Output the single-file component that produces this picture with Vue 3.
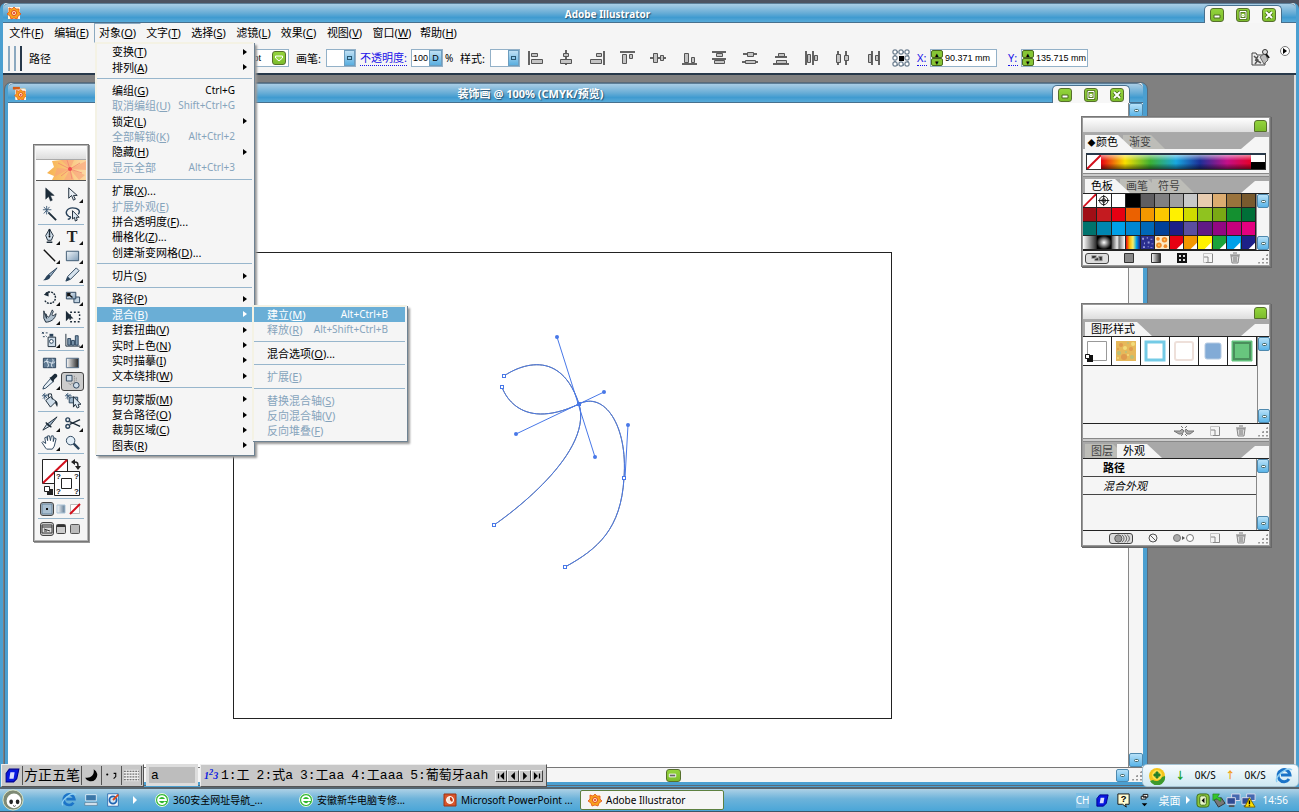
<!-- App.vue -->
<template>
    <div class="desktop">
        <svg class="defs" aria-hidden="true">
            <defs>
                <linearGradient id="mono"><stop offset="0" stop-color="#fff" /><stop offset="1" stop-color="#222" /></linearGradient>
                <linearGradient id="steel"><stop offset="0" stop-color="#fff" /><stop offset="1" stop-color="#5d7993" /></linearGradient>
                <linearGradient id="steel2" x2="1" y2="1"><stop offset="0" stop-color="#f2f7fb" /><stop offset="1" stop-color="#7f9db8" /></linearGradient>
            </defs>
        </svg>
        <main class="app-window">
            <header class="titlebar">
                <svg class="logo" viewBox="0 0 14 14" v-html="flower"></svg>
                <h1>Adobe Illustrator</h1>
                <div class="window-buttons">
                    <button v-for="b in windowButtons" :key="b.name" :aria-label="b.name" class="green">
                        <svg viewBox="0 0 12 12" v-html="b.icon"></svg>
                    </button>
                </div>
            </header>

            <nav class="menubar">
                <div v-for="m in menus" :key="m.key" class="menu-root" :class="{ open: m.key === openMenu }">
                    <button @click="openMenu = m.key">{{ m.label }}(<u>{{ m.key }}</u>)</button>
                    <ul v-if="m.key === 'O' && openMenu === 'O'" class="menu main-menu">
                        <li v-for="(item, i) in objectMenu" :key="i"
                            :class="{ separator: !item.label, selected: item.children }">
                            <button v-if="item.label" :disabled="item.disabled">
                                <span>{{ item.label }}<template v-if="item.key">(<u>{{ item.key }}</u>)</template>{{ item.dots }}</span>
                                <kbd v-if="item.shortcut">{{ item.shortcut }}</kbd>
                                <i v-if="item.arrow" class="arrow"></i>
                            </button>
                            <ul v-if="item.children" class="menu sub-menu">
                                <li v-for="(sub, j) in item.children" :key="j"
                                    :class="{ separator: !sub.label, selected: j === 0 }">
                                    <button v-if="sub.label" :disabled="sub.disabled">
                                        <span>{{ sub.label }}(<u>{{ sub.key }}</u>){{ sub.dots }}</span>
                                        <kbd v-if="sub.shortcut">{{ sub.shortcut }}</kbd>
                                    </button>
                                </li>
                            </ul>
                        </li>
                    </ul>
                </div>
            </nav>

            <section class="controlbar">
                <div class="grip"><i></i><i></i><i></i></div>
                <strong class="kind">路径</strong>
                <div class="field stroke-field">
                    <input aria-label="描边粗细" value="1 pt">
                    <button class="green" aria-label="描边选项"><svg viewBox="0 0 12 12"><path d="M2.500 4h7v2L6 9 2.500 6z" fill="#9bdc4a" stroke="#fff" /></svg></button>
                </div>
                <span class="label">画笔:</span>
                <div class="field picker"><span></span><button aria-label="画笔"><i></i></button></div>
                <a href="#" class="link">不透明度:</a>
                <div class="field opacity-field">
                    <input aria-label="不透明度" value="100">
                    <button aria-label="不透明度滑块">D</button>
                </div>
                <span class="percent">%</span>
                <span class="label">样式:</span>
                <div class="field picker"><span></span><button aria-label="样式"><i></i></button></div>
                <div class="aligns">
                    <button v-for="(a, i) in aligns" :key="i" :aria-label="a.name">
                        <svg viewBox="0 0 18 18" v-html="a.icon"></svg>
                    </button>
                </div>
                <svg class="refpoint" viewBox="0 0 19 19">
                    <path d="M3 3h13v13H3z" fill="none" stroke="#435a70" stroke-dasharray="1 1" />
                    <path d="M7 7h5v5H7z" fill="#000" />
                    <rect v-for="(p, i) in refPoints" :key="i" :x="p[0]" :y="p[1]" width="4" height="4" rx="1" fill="#fff" stroke="#435a70" />
                </svg>
                <label class="link axis" for="pos-x">X:</label>
                <div class="field coord"><span class="spin"><button aria-label="X 增加">▴</button><button aria-label="X 减少">▾</button></span><input id="pos-x" value="90.371 mm"></div>
                <label class="link axis" for="pos-y">Y:</label>
                <div class="field coord"><span class="spin"><button aria-label="Y 增加">▴</button><button aria-label="Y 减少">▾</button></span><input id="pos-y" value="135.715 mm"></div>
                <button class="bridge" aria-label="Bridge">
                    <svg viewBox="0 0 20 20"><path d="M2 5h4l1 2h8v10H2z" fill="#eee" stroke="#444" /><path d="M4 8l4 4-3 4M5 12l3 1M8 8l-2 4 5 3" fill="none" stroke="#555" stroke-width="1.500" /><path d="M10 9l5-4 3 7-4 4z" fill="#bbb" stroke="#666" /><circle cx="15" cy="4" r="2.500" fill="#ddd" stroke="#333" /><path d="M16 6l3 4" stroke="#111" stroke-width="2" /></svg>
                </button>
                <button class="flyout" aria-label="面板菜单"><i class="arrow"></i></button>
            </section>

            <section class="workspace">
                <article class="document">
                    <header class="titlebar doc-title">
                        <svg class="logo" viewBox="0 0 16 16"><path d="M4 3h11v12H4z" fill="#fff" stroke="#d9c8a0" /><g transform="translate(3 3)" v-html="flower"></g><path d="M1 1h8v3H1z" fill="#d65a14" /></svg>
                        <h2>装饰画 @ 100% (CMYK/预览)</h2>
                        <div class="window-buttons">
                            <button v-for="b in windowButtons" :key="b.name" :aria-label="b.name" class="green">
                                <svg viewBox="0 0 12 12" v-html="b.icon"></svg>
                            </button>
                        </div>
                    </header>
                    <div class="doc-body">
                        <svg class="canvas">
                            <rect x="225" y="149" width="658" height="466" fill="#fff" stroke="#222" shape-rendering="crispEdges" />
                            <g fill="none">
                                <g v-for="(c, i) in ['#777', '#4878e8']" :key="i" :stroke="c">
                                    <path d="M496 273C496 273 549 234 571 301C587 354 486 422 486 422" />
                                    <path d="M494 284C494 284 508 331 571 301C596 288 620 322 616 375C613 426 590 446 557 464" />
                                </g>
                                <path d="M549 234L587 354M508 331L596 289M620 322L617 375" stroke="#4878e8" />
                            </g>
                            <circle v-for="(p, i) in handles" :key="'h' + i" :cx="p[0]" :cy="p[1]" r="2" fill="#4878e8" />
                            <rect v-for="(p, i) in anchors" :key="'a' + i" :x="p[0] - 1.5" :y="p[1] - 1.5" width="3" height="3" fill="#fff" stroke="#4878e8" />
                            <rect x="569" y="299" width="4" height="4" fill="#4878e8" />
                        </svg>
                        <div class="scroll tall"><button aria-label="向上滚动"><i></i></button><button aria-label="向下滚动"><i></i></button></div>
                    </div>
                    <div class="doc-bottom">
                        <button class="green thumb" aria-label="水平滚动块"><svg viewBox="0 0 12 12"><path d="M2.500 4.500h7v3h-7z" fill="#666" stroke="#fff" /></svg></button>
                        <button class="scroll-right" aria-label="向右滚动"><i></i></button>
                        <span class="sizer"></span>
                    </div>
                </article>
            </section>
        </main>

        <aside class="toolbox">
            <div class="palette-title"></div>
            <svg class="banner" viewBox="0 0 50 20" preserveAspectRatio="none">
                <defs><linearGradient id="petal"><stop offset="0" stop-color="#f7b24e" /><stop offset="1" stop-color="#fcd9a4" /></linearGradient></defs>
                <path d="M0 0h50v20H0z" fill="#fff" />
                <path d="M11 13L18 7 16 1l9-1h25v20H16l2-4z" fill="url(#petal)" />
                <path d="M34 9L25 0h13zM34 9l16-8v9zM34 9l15 6-6 5zM34 9l4 11H28zM34 9L18 17l3-9z" fill="#f8a07a" opacity=".6" />
                <path d="M34 9L22 3M34 9l-3-9M34 9l10-6M34 9l12 4M34 9l2 10M34 9l-9 7" stroke="#f08070" stroke-width=".7" fill="none" />
                <circle cx="34" cy="9" r="2" fill="#f04a50" />
            </svg>
            <div v-for="(group, g) in tools" :key="g" class="tool-group">
                <button v-for="t in group" :key="t.name" :aria-label="t.name" :class="{ active: t.active, more: t.more }">
                    <svg viewBox="0 0 18 18" v-html="t.icon"></svg>
                </button>
            </div>
            <svg class="fill-stroke" viewBox="0 3 48 42">
                <path d="M5.500 6.500h25v24h-25z" fill="#fff" stroke="#222" />
                <path d="M6 30L30 7" stroke="#d20f1c" stroke-width="2" />
                <path d="M17.500 18.500h25v24h-25z" fill="#fff" stroke="#222" />
                <path d="M24.500 25.500h10v10h-10z" fill="#fff" stroke="#222" />
                <g font-family="Liberation Sans" font-size="8" font-weight="bold" fill="#222">
                    <text x="19" y="26">?</text><text x="37" y="26">?</text><text x="19" y="41">?</text><text x="37" y="41">?</text>
                </g>
                <path d="M37 9c4 0 4 1 4 5" fill="none" stroke="#222" stroke-width="1.500" /><path d="M34 9l4-3v6zM38 13h6l-3 4z" fill="#222" />
                <path d="M10 36h6v6h-6z" fill="#222" /><path d="M7.500 33.500h5v5h-5z" fill="#fff" stroke="#222" />
            </svg>
            <div class="mode-row">
                <button class="active" aria-label="颜色"><svg viewBox="0 0 12 12"><path d="M1 1h10v10H1z" fill="#a9bfd1" stroke="#63819a" /><path d="M5 5h2v2H5z" fill="#111" /></svg></button>
                <button aria-label="渐变"><svg viewBox="0 0 12 12"><path d="M2 2h8v8H2z" fill="url(#steel)" stroke="#a9c2d6" /></svg></button>
                <button aria-label="无"><svg viewBox="0 0 12 12"><path d="M1.500 1.500h9v9h-9z" fill="#fff" stroke="#bbb" /><path d="M1 11L11 1" stroke="#d20f1c" stroke-width="2" /></svg></button>
            </div>
            <div class="mode-row">
                <button class="active" aria-label="标准屏幕模式"><svg viewBox="0 0 12 12"><path d="M1 2h10v8H1zM1 4h10M3 6l6 2M3 8h3" fill="#ddd" stroke="#333" /></svg></button>
                <button aria-label="带菜单栏的全屏模式"><svg viewBox="0 0 12 12"><rect x="1.500" y="1.500" width="9" height="9" rx="1" fill="#ccc" stroke="#444" /><path d="M2 3h8" stroke="#333" stroke-width="2" /></svg></button>
                <button aria-label="全屏模式"><svg viewBox="0 0 12 12"><rect x="1.500" y="1.500" width="9" height="9" rx="1" fill="#bbb" stroke="#555" /></svg></button>
            </div>
        </aside>

        <aside class="palette colors">
            <div class="palette-title"><button class="green" aria-label="折叠颜色面板"></button></div>
            <div class="tabs"><button class="tab on"><small>◆</small>颜色</button><button class="tab">渐变</button></div>
            <div class="ramp"><svg viewBox="0 0 14 14"><path d="M0 14L14 0" stroke="#d20f1c" stroke-width="2" /></svg><span class="spectrum"></span><span class="bw"></span></div>
            <div class="divider"></div>
            <div class="tabs"><button class="tab on">色板</button><button class="tab">画笔</button><button class="tab">符号</button></div>
            <div class="list">
                <div class="swatches">
                    <button v-for="(s, i) in swatches" :key="i" :aria-label="'色板 ' + (i + 1)" :style="{ background: s }">
                        <svg v-if="i === 0" viewBox="0 0 14 14"><path d="M0 14L14 0" stroke="#d20f1c" stroke-width="2" /></svg>
                        <svg v-if="i === 1" viewBox="0 0 14 14"><circle cx="7" cy="7" r="4.500" fill="none" stroke="#111" /><circle cx="7" cy="7" r="2" fill="none" stroke="#111" /><path d="M7 1v12M1 7h12" stroke="#111" /></svg>
                        <svg v-if="i === 40" viewBox="0 0 14 14"><path d="M1 2h2v2H1zM6 1h1v2H6zM10 3h2v1h-2zM3 7h1v2H3zM7 6h2v2H7zM11 8h2v1h-2zM2 11h2v2H2zM7 11h1v1H7zM10 12h2v1h-2z" fill="#9aa0dc" /></svg>
                        <svg v-if="i === 41" viewBox="0 0 14 14"><g fill="#f08a28"><circle cx="3" cy="3" r="2" /><circle cx="10" cy="4" r="3" /><circle cx="4" cy="10" r="3" /><circle cx="11" cy="11" r="2" /></g><g fill="#f9d25a"><circle cx="10" cy="4" r="1" /><circle cx="4" cy="10" r="1" /></g></svg>
                        <svg v-if="i > 41" viewBox="0 0 14 14"><path d="M14 7v7H7z" fill="#fff" /></svg>
                    </button>
                </div>
                <div class="scroll"><button aria-label="向上"><i></i></button><button aria-label="向下"><i></i></button></div>
            </div>
            <div class="palette-foot spread">
                <button class="framed" aria-label="显示所有色板"><svg viewBox="0 0 22 12"><path d="M4 2h6v4H4zM8 5h6v4H8zM13 3h5v6h-5z" fill="#333" stroke="#aaa" /></svg></button>
                <button aria-label="颜色色板"><svg viewBox="0 0 12 12"><path d="M1.500 1.500h9v9h-9z" fill="#888" stroke="#333" /></svg></button>
                <button aria-label="渐变色板"><svg viewBox="0 0 12 12"><path d="M1.500 1.500h9v9h-9z" fill="url(#mono)" stroke="#333" /></svg></button>
                <button aria-label="图案色板"><svg viewBox="0 0 12 12"><path d="M1 1h10v10H1z" fill="#111" /><path d="M3 3h2v2H3zM7 3h2v2H7zM3 7h2v2H3zM7 7h2v2H7z" fill="#ddd" /></svg></button>
                <button aria-label="新建色板"><svg viewBox="0 0 12 12" v-html="pageIcon"></svg></button>
                <button aria-label="删除色板"><svg viewBox="0 0 12 12" v-html="trashIcon"></svg></button>
                <span class="sizer"></span>
            </div>
        </aside>

        <aside class="palette styles">
            <div class="palette-title"><button class="green" aria-label="折叠图形样式面板"></button></div>
            <div class="tabs"><button class="tab on">图形样式</button></div>
            <div class="list">
                <div class="style-area">
                    <div class="style-row">
                        <button v-for="(s, i) in graphicStyles" :key="i" :aria-label="'图形样式 ' + (i + 1)"><svg viewBox="0 0 28 28" v-html="s"></svg></button>
                    </div>
                </div>
                <div class="scroll"><button aria-label="向上"><i></i></button><button aria-label="向下"><i></i></button></div>
            </div>
            <div class="palette-foot ends">
                <button aria-label="断开链接"><svg class="wide" viewBox="0 0 22 12"><path d="M1 6h6l2-2 2 2-2 3H6zM21 6h-6l-2-2-1 2 2 3h3z" fill="#aaa" stroke="#777" /><path d="M8 1l2 2M14 1l-2 2M8 11l2-2M14 11l-2-2" stroke="#777" /></svg></button>
                <button aria-label="新建图形样式"><svg viewBox="0 0 12 12" v-html="pageIcon"></svg></button>
                <button aria-label="删除图形样式"><svg viewBox="0 0 12 12" v-html="trashIcon"></svg></button>
                <span class="sizer"></span>
            </div>
            <div class="divider"></div>
            <div class="tabs"><button class="tab">图层</button><button class="tab on">外观</button></div>
            <div class="list">
                <ul class="appearance">
                    <li><b>路径</b></li>
                    <li><em>混合外观</em></li>
                </ul>
                <div class="scroll"><button aria-label="向上"><i></i></button><button aria-label="向下"><i></i></button></div>
            </div>
            <div class="palette-foot ends">
                <button class="framed" aria-label="新建图稿具有基本外观"><svg class="wide" viewBox="0 0 22 10"><circle cx="8" cy="5" r="4" fill="#999" stroke="#555" /><path d="M12 1c3 2 3 6 0 8M15 1c3 2 3 6 0 8M18 1c3 2 3 6 0 8" fill="none" stroke="#444" /></svg></button>
                <button aria-label="清除外观"><svg viewBox="0 0 12 12"><circle cx="6" cy="6" r="4" fill="none" stroke="#555" /><path d="M3 3l6 6" stroke="#555" /></svg></button>
                <button aria-label="简化至基本外观"><svg class="wide" viewBox="0 0 22 12"><circle cx="4" cy="6" r="3.500" fill="#aaa" stroke="#777" /><path d="M9 4l3 2-3 2z" fill="#555" /><circle cx="17" cy="6" r="3.500" fill="#fff" stroke="#777" /></svg></button>
                <button aria-label="复制项目"><svg viewBox="0 0 12 12" v-html="pageIcon"></svg></button>
                <button aria-label="删除项目"><svg viewBox="0 0 12 12" v-html="trashIcon"></svg></button>
                <span class="sizer"></span>
            </div>
        </aside>

        <section class="ime">
            <div class="ime-bar">
                <button aria-label="输入法"><svg viewBox="0 0 16 16" v-html="imeLogo"></svg></button>
                <button class="ime-name">方正五笔</button>
                <button aria-label="半角"><svg viewBox="0 0 16 16"><path d="M10 2a6 6 0 1 1-8 8c6 1 9-3 8-8z" fill="#000" /></svg></button>
                <button aria-label="标点"><svg viewBox="0 0 16 16"><circle cx="4" cy="7" r="1" /><path d="M10 6h2v3l-2 2" fill="none" stroke="#000" /></svg></button>
                <button aria-label="软键盘"><svg class="keys" viewBox="0 0 18 14"><path d="M1 1h16v12H1z" fill="#eee" /><path d="M1 2.500h16M1 5.500h16M1 8.500h16M1 11.500h16" stroke="#444" stroke-dasharray="2 1" /></svg></button>
            </div>
            <input class="ime-input" aria-label="编码" value="a">
            <div class="ime-bar candidates">
                <b>1<sup>2</sup>3</b>
                <button v-for="(c, i) in candidates" :key="c" class="cand">{{ i + 1 }}:{{ c }}</button>
                <span class="pager"><button v-for="p in pager" :key="p.name" :aria-label="p.name"><svg viewBox="0 0 8 8"><path :d="p.d" stroke="#000" /></svg></button></span>
            </div>
        </section>

        <section class="net">
            <svg viewBox="0 0 18 18"><circle cx="9" cy="9" r="8" fill="#f5c51c" /><path d="M2 14A8 8 0 0 0 17 9l-3 1a6 6 0 0 1-9 3z" fill="#3e9a2c" /><circle cx="9" cy="8" r="5" fill="#ffe04a" /><path d="M8 5h2v2h2v2h-2v2H8V9H6V7h2z" fill="#27802a" stroke="#27802a" /></svg>
            <span class="down">↓</span><span>0K/S</span><span class="up">↑</span><span>0K/S</span>
            <svg viewBox="0 0 18 18" v-html="ieIcon"></svg>
        </section>

        <footer class="taskbar">
            <button class="start" aria-label="开始"><svg viewBox="0 0 24 24"><circle cx="12" cy="12" r="11" fill="#7e8a75" stroke="#dfe8c8" /><circle cx="13" cy="13" r="8" fill="#fff" /><ellipse cx="10" cy="14" rx="2" ry="2.500" fill="#222" /><ellipse cx="17" cy="14" rx="2" ry="2.500" fill="#222" /><path d="M12 18q2 2 3 0" stroke="#444" fill="none" /></svg></button>
            <div class="quick">
                <button aria-label="Internet Explorer"><svg viewBox="0 0 18 18" v-html="ieIcon"></svg></button>
                <button aria-label="显示桌面"><svg viewBox="0 0 18 18"><path d="M3 3h12v7H3z" fill="#3a76a8" stroke="#dff0fa" /><path d="M2 12h14v3H2z" fill="#dceaf4" stroke="#456" stroke-width=".5" /></svg></button>
                <button aria-label="Outlook"><svg viewBox="0 0 18 18"><path d="M3 2h12v14H3z" fill="#f4f8fc" stroke="#2c6bb0" /><circle cx="9" cy="9" r="4" fill="#cfe4f5" stroke="#1d62b0" stroke-width="2" /><path d="M9 9l6-6" stroke="#e04818" stroke-width="2" /></svg></button>
            </div>
            <i class="chevron"></i>
            <div class="tasks">
                <button v-for="t in tasks" :key="t.title" :class="{ current: t.current }">
                    <svg viewBox="0 0 14 14" v-html="t.icon"></svg><span>{{ t.title }}</span>
                </button>
            </div>
            <div class="tray">
                <span class="lang">CH</span>
                <svg viewBox="0 0 16 16" v-html="imeLogo"></svg>
                <svg viewBox="0 0 16 16"><path d="M2 1h12v11h-4l1 3-4-3H2z" fill="#fffbd0" stroke="#111" /><text x="5" y="10" font-family="Liberation Sans" font-weight="bold" font-size="10">?</text></svg>
                <svg viewBox="0 0 16 16"><path d="M6.500 1.500h5v3h-5zM4.500 3.500h5v3h-5z" fill="#fff" stroke="#111" /><path d="M5 11h6l-3 3z" /></svg>
                <span class="desk">桌面</span>
                <i class="chevron"></i>
                <div class="tray-icons">
                    <svg viewBox="0 0 16 16"><rect x="1" y="1" width="13" height="14" rx="3" fill="#8cc63a" stroke="#3a6a18" /><rect x="4" y="3" width="7" height="10" rx="2" fill="#e7f5c8" stroke="#3a6a18" /><path d="M9 5v6L6 8z" /></svg>
                    <svg viewBox="0 0 16 16"><path d="M3 7l8-2 4 6-7 4z" fill="#777" stroke="#333" /><path d="M2 1v7l4-2 4 3 1-3-4-2 2-3z" fill="#35c42c" stroke="#1b7a18" stroke-width=".6" /></svg>
                    <svg viewBox="0 0 16 16" v-html="netIcon"></svg>
                    <svg viewBox="0 0 16 16"><g v-html="netIcon"></g><path d="M9 5l6 10H4z" fill="#ffe000" stroke="#7a6500" /><path d="M9 8v4M9 13v1" stroke="#000" stroke-width="1.500" /></svg>
                </div>
                <time>14:56</time>
            </div>
        </footer>
    </div>
</template>

<script setup>
import { ref } from 'vue';

const openMenu = ref('O');

const menus = [
    { label: '文件', key: 'F' }, { label: '编辑', key: 'E' }, { label: '对象', key: 'O' },
    { label: '文字', key: 'T' }, { label: '选择', key: 'S' }, { label: '滤镜', key: 'L' },
    { label: '效果', key: 'C' }, { label: '视图', key: 'V' }, { label: '窗口', key: 'W' },
    { label: '帮助', key: 'H' },
];

const blendMenu = [
    { label: '建立', key: 'M', shortcut: 'Alt+Ctrl+B' },
    { label: '释放', key: 'R', shortcut: 'Alt+Shift+Ctrl+B', disabled: true },
    {},
    { label: '混合选项', key: 'O', dots: '...' },
    {},
    { label: '扩展', key: 'E', disabled: true },
    {},
    { label: '替换混合轴', key: 'S', disabled: true },
    { label: '反向混合轴', key: 'V', disabled: true },
    { label: '反向堆叠', key: 'F', disabled: true },
];

const objectMenu = [
    { label: '变换', key: 'T', arrow: true },
    { label: '排列', key: 'A', arrow: true },
    {},
    { label: '编组', key: 'G', shortcut: 'Ctrl+G' },
    { label: '取消编组', key: 'U', shortcut: 'Shift+Ctrl+G', disabled: true },
    { label: '锁定', key: 'L', arrow: true },
    { label: '全部解锁', key: 'K', shortcut: 'Alt+Ctrl+2', disabled: true },
    { label: '隐藏', key: 'H', arrow: true },
    { label: '显示全部', shortcut: 'Alt+Ctrl+3', disabled: true },
    {},
    { label: '扩展', key: 'X', dots: '...' },
    { label: '扩展外观', key: 'E', disabled: true },
    { label: '拼合透明度', key: 'F', dots: '...' },
    { label: '栅格化', key: 'Z', dots: '...' },
    { label: '创建渐变网格', key: 'D', dots: '...' },
    {},
    { label: '切片', key: 'S', arrow: true },
    {},
    { label: '路径', key: 'P', arrow: true },
    { label: '混合', key: 'B', arrow: true, children: blendMenu },
    { label: '封套扭曲', key: 'V', arrow: true },
    { label: '实时上色', key: 'N', arrow: true },
    { label: '实时描摹', key: 'I', arrow: true },
    { label: '文本绕排', key: 'W', arrow: true },
    {},
    { label: '剪切蒙版', key: 'M', arrow: true },
    { label: '复合路径', key: 'O', arrow: true },
    { label: '裁剪区域', key: 'C', arrow: true },
    { label: '图表', key: 'R', arrow: true },
];

const flower = '<path d="M1 1h12v12H1z" fill="#fff6e0"/><path d="M7 1l2 2 3 0 0 3 2 2-3 2-1 3-3-1-3 1-1-3-3-2 2-2 0-4 3 1z" fill="#f6a21c" stroke="#e4501c" stroke-width=".8"/><circle cx="7" cy="7" r="2.500" fill="#fff3c0" stroke="#e4401c"/><circle cx="7" cy="7" r="1" fill="#d22"/>';
const ieIcon = '<path d="M14 12a6 6 0 1 1 1-4H6" fill="none" stroke="#1c74c8" stroke-width="3"/><path d="M2 15C-1 10 12-1 17 3" fill="none" stroke="#8fd0f4" stroke-width="1.500"/>';
const greenE = '<circle cx="7" cy="7" r="6.500" fill="#2eb82e" stroke="#e8f8e8"/><path d="M10.500 9a4 4 0 1 1 .5-2H4" fill="none" stroke="#fff" stroke-width="1.800"/>';
const pptIcon = '<path d="M1 1h12v12H1z" fill="#d8552b" stroke="#9c3414"/><circle cx="7" cy="7" r="3.500" fill="#fbe3d4" stroke="#fff"/><path d="M7 7V4a3 3 0 0 1 2 5z" fill="#c23a12"/>';
const imeLogo = '<path d="M5 2h9l-2 9-3 3H2V6z" fill="#0818e0" stroke="#000090"/><path d="M6 5h4l-1 6H5z" fill="#d8dcff"/>';
const netIcon = '<path d="M6 1h9v7H6z" fill="#4468b0" stroke="#dde"/><path d="M1 5h9v7H1z" fill="#304c94" stroke="#dde"/><path d="M3 14h6" stroke="#555" stroke-width="2"/>';
const pageIcon = '<path d="M1.500 1.500h9v9h-9z" fill="#f5f5f5" stroke="#c4c4c4"/><path d="M2 5h4v5M10.500 2v8.500H4" fill="none" stroke="#888"/>';
const trashIcon = '<path d="M2 4h8l-1 7H3z" fill="#ddd" stroke="#888"/><path d="M1 3h10M4 1h4M5 5v5M7 5v5" stroke="#777"/>';

const windowButtons = [
    { name: '最小化', icon: '<path d="M3 6h6v3H3z" fill="#fff" stroke="#4c6a20"/>' },
    { name: '还原', icon: '<path d="M3 2.500h6v7H3z" fill="none" stroke="#4c6a20" stroke-width="2.500"/><path d="M3 2.500h6v7H3zM5 5.500h2v2H5z" fill="none" stroke="#fff"/>' },
    { name: '关闭', icon: '<path d="M3 3l6 6M9 3l-6 6" stroke="#446a16" stroke-width="3.500"/><path d="M3 3l6 6M9 3l-6 6" stroke="#fff" stroke-width="2"/>' },
];

const box = (x, y, w, h) => `<path d="M${x}.5 ${y}.5h${w}v${h}h-${w}z" fill="#c4c4c4" stroke="#555"/>`;
const line = (d) => `<path d="${d}" stroke="#333" stroke-width="1.500" fill="none"/>`;
const aligns = [
    { name: '水平左对齐', icon: line('M3 2v14') + box(5, 4, 6, 3) + box(5, 10, 11, 4) },
    { name: '水平居中对齐', icon: line('M9 1v15') + box(6, 4, 5, 3) + box(3, 10, 11, 4) },
    { name: '水平右对齐', icon: line('M16 2v14') + box(8, 4, 5, 3) + box(2, 10, 11, 4) },
    { name: '垂直顶对齐', icon: line('M2 3h15') + box(4, 5, 4, 9) + box(11, 5, 3, 4) },
    { name: '垂直居中对齐', icon: line('M1 9h16') + box(4, 4, 4, 9) + box(11, 6, 3, 5) },
    { name: '垂直底对齐', icon: line('M2 15h15') + box(4, 4, 4, 9) + box(11, 8, 3, 5) },
    { name: '垂直顶分布', icon: line('M2 3h14M2 10h14') + box(6, 4, 6, 3) + box(4, 11, 10, 3) },
    { name: '垂直居中分布', icon: line('M2 5h14M1 13h16') + box(6, 3, 6, 4) + box(4, 11, 10, 3) },
    { name: '垂直底分布', icon: line('M3 8h12M1 15h16') + box(6, 4, 6, 3) + box(4, 11, 10, 3) },
    { name: '水平左分布', icon: line('M4 2v14M11 2v14') + box(5, 5, 3, 8) + box(12, 6, 3, 5) },
    { name: '水平居中分布', icon: line('M5 2v14M13 2v14') + box(3, 5, 4, 8) + box(11, 6, 4, 5) },
    { name: '水平右分布', icon: line('M8 2v14M15 2v14') + box(4, 5, 3, 8) + box(11, 6, 3, 5) },
];
const refPoints = [[1, 1], [7, 1], [13, 1], [1, 7], [13, 7], [1, 13], [7, 13], [13, 13]];

const handles = [[549, 234], [587, 354], [508, 331], [596, 289], [620, 322]];
const anchors = [[496, 273], [494, 284], [486, 422], [616, 375], [557, 464]];

const tools = [
    [
        { name: '选择工具', icon: '<path d="M5 2v12l3-3 2 5 2-1-2-5h4z" fill="#1c2b38" stroke="#1c2b38" stroke-width=".5"/>' },
        { name: '直接选择工具', more: true, icon: '<path d="M5 2v11l3-3 2 5 2-1-2-4h4z" fill="#e8eef4" stroke="#1c2b38"/>' },
        { name: '魔棒工具', icon: '<path d="M8 8l8 8" stroke="#1c2b38" stroke-width="2"/><path d="M6 1v9M2 5h9M3 2l6 7M9 2L3 9" stroke="#425f7a"/>' },
        { name: '套索工具', icon: '<path d="M5 12C0 9 3 3 9 3s9 3 6 7M5 12c3 0 2 3-1 3" fill="none" stroke="#29425a" stroke-width="1.500"/><path d="M9 6v9l2-2 1 4 2-1-1-3h3z" fill="#dce8f2" stroke="#1c2b38"/>' },
    ],
    [
        { name: '钢笔工具', more: true, icon: '<path d="M9 1l4 7-2 5H7L5 8z" fill="#cfdde9" stroke="#1c2b38"/><path d="M9 1v7M6 15h6" stroke="#1c2b38" stroke-width="1.500"/><circle cx="9" cy="9" r="1"/>' },
        { name: '文字工具', more: true, icon: '<text x="3" y="15" font-family="Liberation Serif" font-weight="bold" font-size="17" fill="#222">T</text>' },
        { name: '直线段工具', more: true, icon: '<path d="M3 3l12 12" stroke="#111" stroke-width="1.500"/>' },
        { name: '矩形工具', more: true, icon: '<path d="M2.500 4.500h13v10h-13z" fill="url(#steel2)" stroke="#3d5871"/>' },
        { name: '画笔工具', icon: '<path d="M17 2L8 9l2 2z" fill="#9db4c8" stroke="#29425a"/><path d="M8 9l2 2c-1 4-5 4-8 4 3-1 3-5 6-6z" fill="#29425a"/>' },
        { name: '铅笔工具', more: true, icon: '<path d="M13 2l3 3-9 9-5 2 2-5z" fill="#d6e3ee" stroke="#29425a"/><path d="M4 11l3 3-5 2z" fill="#29425a"/>' },
    ],
    [
        { name: '旋转工具', more: true, icon: '<path d="M5 5a6 6 0 1 1-1 7" fill="none" stroke="#1c2b38" stroke-width="1.500" stroke-dasharray="2 1"/><path d="M3 6l5-4v6z" fill="#1c2b38"/>' },
        { name: '比例缩放工具', more: true, icon: '<path d="M10.500 8.500h6v6h-6z" fill="#c2d3e1" stroke="#29425a"/><path d="M2.500 3.500h10v7h-10z" fill="url(#steel2)" stroke="#29425a"/><path d="M4 5l5 4M4 8V5h3" stroke="#111" stroke-width="1.500" fill="none"/>' },
        { name: '变形工具', more: true, icon: '<path d="M3 3c2 6 2 6 3 8L5 6c4 8 4 1 7-4l1 2c-3 5 0 5 3 2-1 6-6 9-11 9L3 11z" fill="#aebfcd" stroke="#1c2b38"/>' },
        { name: '自由变换工具', icon: '<path d="M6.500 4.500h10v10h-10z" fill="none" stroke="#1c2b38" stroke-width="1.500" stroke-dasharray="2 2"/><path d="M2 3v11l3-3h5z" fill="#1c2b38"/>' },
    ],
    [
        { name: '符号喷枪工具', more: true, icon: '<path d="M7.500 6.500h8v10h-8z" fill="#cfdde9" stroke="#1c2b38"/><path d="M9 3h4v3H9z" fill="#29425a"/><circle cx="11" cy="11" r="2" fill="#fff" stroke="#29425a"/><path d="M1 1l2 2M3 1L1 3M5 2h2M2 6h2M5 5l1 1" stroke="#29425a"/>' },
        { name: '柱形图工具', more: true, icon: '<path d="M2 3v13h15" stroke="#1c2b38" fill="none"/><path d="M4 8h3v7H4zM8 10h3v5H8zM12 5h3v10h-3z" fill="#7f99af" stroke="#29425a"/>' },
    ],
    [
        { name: '网格工具', icon: '<path d="M2.500 4.500h13v10h-13z" fill="#5f7a93" stroke="#29425a"/><path d="M3 9c4-4 8 4 12-1M7 5c-3 4 3 5 0 9M12 5c3 3-3 5 0 9" stroke="#e8f0f7" fill="none"/>' },
        { name: '渐变工具', icon: '<path d="M2.500 4.500h13v10h-13z" fill="url(#mono)" stroke="#56708a"/>' },
        { name: '吸管工具', more: true, icon: '<path d="M10 6l3 3-8 7-3 1 1-3z" fill="#e6eff6" stroke="#29425a"/><path d="M9 5l2-1 3-3c2-1 4 1 3 3l-3 3-1 3z" fill="#1c2b38"/>' },
        { name: '混合工具', active: true, icon: '<path d="M2.500 2.500h6v6h-6z" fill="#cfdde9" stroke="#29425a"/><circle cx="13" cy="13" r="3" fill="#cfdde9" stroke="#29425a"/><path d="M11 3v8M8 11h3M13 5v4M5 11l3 2" stroke="#777" stroke-dasharray="1 1"/>' },
        { name: '实时上色工具', icon: '<path d="M5 9l5-4 6 5-6 6z" fill="#cfdde9" stroke="#1c2b38"/><path d="M8 6V2h3l1 6" stroke="#1c2b38" fill="none"/><path d="M15 9c3 1 3 4 2 7l-2-4z" fill="#1c2b38"/><path d="M4 1v7M1 4h7M2 2l5 5M7 2L2 7" stroke="#425f7a"/>' },
        { name: '实时上色选择工具', icon: '<path d="M5.500 5.500h9v6h-9z" fill="#9db4c8" stroke="#29425a"/><path d="M10 5v11l2-3 2 4 2-1-1-3h3z" fill="#dce8f2" stroke="#1c2b38"/><path d="M4 1v7M1 4h7M2 2l5 5M7 2L2 7" stroke="#425f7a"/>' },
    ],
    [
        { name: '切片工具', more: true, icon: '<path d="M17 2L9 12l-3-2z" fill="#9db4c8" stroke="#1c2b38"/><path d="M6 10l3 2-7 4z" fill="#cfdde9" stroke="#1c2b38"/><path d="M5 8l6 5" stroke="#1c2b38" stroke-width="1.500"/>' },
        { name: '剪刀工具', more: true, icon: '<path d="M17 5L6 10M17 12L6 7" stroke="#1c2b38" stroke-width="1.500"/><circle cx="4" cy="5" r="2" fill="none" stroke="#29425a" stroke-width="1.500"/><circle cx="4" cy="12" r="2" fill="none" stroke="#29425a" stroke-width="1.500"/>' },
        { name: '抓手工具', more: true, icon: '<path d="M5 15L1 9l1-1 3 2-1-6 2-1 1 4V2h2l1 5 1-5h2v6l1-4 2 1-2 8-2 3H6z" fill="#fff" stroke="#29425a"/>' },
        { name: '缩放工具', icon: '<path d="M10 10l6 6" stroke="#29425a" stroke-width="2.500"/><circle cx="7" cy="7" r="4.500" fill="#e3eef7" stroke="#29425a"/>' },
    ],
];

const swatches = [
    '#fff', '#fff', '#fff', '#000', '#5f5e61', '#808082', '#a0a0a1', '#c8c9ca', '#e8ccb0', '#dcac70', '#9a733c', '#785a2e',
    '#a00e16', '#c41b20', '#e60012', '#eb6100', '#f39800', '#fcc800', '#fff100', '#cfdb00', '#8fc31f', '#7aa814', '#149030', '#006f38',
    '#00736d', '#0086b0', '#00a0e9', '#0086d1', '#0068b7', '#004098', '#1d1f88', '#5b4ea0', '#601986', '#920783', '#c4007c', '#e4007f',
    'linear-gradient(90deg, #fff, #333)', 'radial-gradient(#fff, #000 75%)', 'linear-gradient(90deg, #555, #eee 40%, #777 55%, #fff)',
    'linear-gradient(90deg, #e60012, #f8b500, #f9f06a, #00a0e9, #1d2088)', '#2b2f8f', '#fbe9c4',
    '#e60012', '#f39800', '#fff100', '#1aa33a', '#00a0e9', '#1d2088',
];

const graphicStyles = [
    '<path d="M4.500 4.500h19v19h-19z" fill="#fff" stroke="#999"/><path d="M4 18h6v7H4z" fill="#111"/><path d="M2.500 17.500h4v4h-4z" fill="#fff" stroke="#111"/>',
    '<path d="M4 4h20v20H4z" fill="#e6b85a"/><g fill="#e09a4e"><circle cx="9" cy="8" r="2"/><circle cx="19" cy="12" r="2"/><circle cx="12" cy="20" r="3"/><circle cx="6" cy="12" r="1"/></g><g fill="#b9c07a"><circle cx="16" cy="6" r="1"/><circle cx="7" cy="16" r="2"/><circle cx="20" cy="20" r="2"/><circle cx="14" cy="15" r="1"/></g><g fill="#f3dc7a"><circle cx="13" cy="11" r="2"/><circle cx="21" cy="7" r="2"/><circle cx="6" cy="21" r="1"/><circle cx="16" cy="18" r="1"/></g>',
    '<path d="M5 5h18v18H5z" fill="#fff" stroke="#74cbe6" stroke-width="3"/>',
    '<rect x="5" y="5" width="18" height="18" rx="2" fill="#fff" stroke="#eee0da" stroke-width="2"/>',
    '<rect x="6" y="6" width="16" height="16" rx="2" fill="#82abd6" stroke="#b6cbe2"/>',
    '<path d="M4 4h20v20H4z" fill="#60c07a" stroke="#60c07a"/><path d="M6 6h16v16H6z" fill="#68c67e" stroke="#4a8f5c" stroke-width="2"/>',
];

const candidates = ['工', '式a', '工aa', '工aaa', '葡萄牙aah'];
const pager = [
    { name: '首页', d: 'M2 2v4M6 2v4L4 4z' },
    { name: '上一页', d: 'M5 2v4L3 4z' },
    { name: '下一页', d: 'M3 2v4l2-2z' },
    { name: '末页', d: 'M6 2v4M2 2v4l2-2z' },
];

const tasks = [
    { title: '360安全网址导航_...', icon: greenE },
    { title: '安徽新华电脑专修...', icon: greenE },
    { title: 'Microsoft PowerPoint ...', icon: pptIcon },
    { title: 'Adobe Illustrator', icon: flower, current: true },
];
</script>

<style>
body {
    margin: 0;
    overflow: hidden;
}
</style>

<style scoped>
* {
    box-sizing: border-box;
}

.desktop {
    position: relative;
    height: 100vh;
    padding-top: 3px;
    display: flex;
    flex-direction: column;
    background: #4d5361;
    font-family: "Noto Sans", "Noto Sans CJK SC", sans-serif;
    font-size: 11px;
    line-height: 15px;
    color: #000;
}

.defs {
    position: absolute;
    width: 0;
    height: 0;
}

button {
    padding: 0;
    border: 0;
    background: none;
    font: inherit;
    color: inherit;
}

input {
    min-width: 0;
    padding: 0;
    border: 0;
    background: none;
    font: inherit;
    outline: none;
}

ul {
    list-style: none;
    margin: 0;
    padding: 0;
}

svg {
    display: block;
}

h1,
h2 {
    flex: 1;
    margin: 0;
    padding-right: 10px;
    text-align: center;
    font-size: 10px;
    line-height: 16px;
    color: #fff;
    text-shadow: 1px 1px 1px #24506e;
}

.app-window {
    flex: 1;
    min-height: 0;
    display: flex;
    flex-direction: column;
    border: 2px solid #4b9fd0;
    border-width: 0 3px 2px;
    border-radius: 6px 6px 0 0;
    background: #f5f5f5;
}

.titlebar {
    flex: none;
    display: flex;
    align-items: flex-end;
    height: 20px;
    padding-left: 4px;
    border-top: 1px solid #5d7f98;
    border-bottom: 1px solid #47708e;
    border-radius: 6px 6px 0 0;
    background: linear-gradient(#a9cde5, #68add6 50%, #409bd0 75%, #58abd9);
}

.logo {
    width: 14px;
    height: 14px;
    margin-bottom: 2px;
}

.window-buttons {
    display: flex;
    justify-content: space-between;
    align-items: center;
    width: 78px;
    height: 18px;
    margin: 0 14px -1px 0;
    padding: 0 5px;
    border: 1px solid #47708e;
    border-bottom: 0;
    border-radius: 5px 5px 0 0;
    background: #f7f7f7;
}

.green {
    width: 14px;
    height: 14px;
    border: 1px solid #56702c;
    border-radius: 3px;
    background: linear-gradient(#93d43c, #7cbc2c);
}

.menubar {
    display: flex;
    height: 20px;
    padding-left: 1px;
}

.menu-root {
    position: relative;
    width: 45px;
    padding-top: 1px;
    border: 1px solid transparent;
}

.menu-root > button {
    width: 100%;
    white-space: nowrap;
}

.menu-root:nth-child(3),
.menu-root:nth-child(8) {
    width: 47px;
}

.menu-root:nth-child(9) {
    width: 48px;
}

.menu-root.open {
    border-color: #8ba9c0 transparent transparent #8ba9c0;
}

.menu {
    position: absolute;
    z-index: 20;
    display: flex;
    flex-direction: column;
    border: 2px solid #f5f5f5;
    border-top-color: #f4f2e4;
    border-left-color: #f4f2e4;
    background: #f5f5f5;
    box-shadow: 1px 1px 0 #6e8292, 3px 3px 2px #999;
}

.main-menu {
    top: 18px;
    left: 0;
    width: 159px;
    height: 413px;
}

.sub-menu {
    top: -2px;
    left: 155px;
    width: 155px;
    height: 136px;
    color: #000;
}

.menu li {
    position: relative;
    flex: 1;
    min-height: 0;
}

.menu li > button {
    display: flex;
    align-items: center;
    justify-content: space-between;
    width: 100%;
    height: 100%;
    padding: 0 17px 0 15px;
    text-align: left;
    white-space: nowrap;
}

.menu li > button:disabled {
    color: #86a4bc;
}

.menu .sub-menu li > button {
    padding-left: 13px;
}

.menu .separator {
    flex: 0 0 8px;
    display: flex;
    align-items: center;
}

.separator::before {
    content: "";
    flex: 1;
    height: 1px;
    background: #98b6cc;
}

.menu li.selected > button {
    background: #6aaed6;
    color: #fff;
}

kbd {
    font-family: inherit;
    font-size: 10px;
}

.arrow {
    border: 3px solid transparent;
    border-left: 4px solid currentColor;
    border-right: 0;
}

.menu .arrow {
    margin-right: -12px;
}

.controlbar {
    display: flex;
    align-items: center;
    height: 32px;
    padding-left: 5px;
    border-bottom: 2px solid #27384a;
    white-space: nowrap;
}

.grip {
    display: flex;
    gap: 4px;
}

.grip i {
    width: 2px;
    height: 25px;
    background: #8ba9c0;
}

.grip i:last-child {
    background: #27384a;
}

.kind {
    width: 130px;
    margin-left: 7px;
    font-weight: normal;
}

.field {
    display: flex;
    height: 18px;
    border: 1px solid #93b1c8;
    background: #fff;
    font-family: "Liberation Sans", sans-serif;
    font-size: 9px;
}

.stroke-field {
    width: 130px;
    margin-right: 7px;
    padding-left: 86px;
}

.stroke-field input {
    width: 26px;
}

.stroke-field .green {
    flex: none;
    margin-top: 1px;
}

.label {
    width: 30px;
}

.picker {
    width: 30px;
}

.picker span {
    flex: 1;
}

.picker button,
.opacity-field button {
    width: 11px;
    border: 1px solid #6d9dbe;
    background: linear-gradient(#bfe0f4, #5aafe0);
}

.picker i {
    display: block;
    height: 4px;
    margin: 0 2px;
    border: 1px solid #27556f;
}

.link {
    color: #1a12e8;
    text-decoration: none;
    border-bottom: 1px dotted #1a12e8;
}

a.link {
    margin: 0 4px;
}

.opacity-field {
    width: 32px;
}

.opacity-field input {
    width: 17px;
    padding-left: 1px;
}

.opacity-field button {
    flex: 1;
    line-height: 14px;
}

.percent {
    width: 17px;
    padding-left: 2px;
    font-size: 10px;
}

.aligns {
    display: grid;
    grid-template-columns: repeat(12, 1fr);
    justify-items: center;
    width: 368px;
}

.aligns svg {
    width: 18px;
    height: 18px;
}

.refpoint {
    width: 19px;
    height: 19px;
    margin: 0 6px 0 4px;
}

.axis {
    width: 10px;
    margin-right: 3px;
}

.coord {
    width: 67px;
    margin-right: 11px;
}

.coord input {
    flex: 1;
    padding-left: 2px;
}

.spin {
    display: flex;
    flex: none;
    flex-direction: column;
    width: 12px;
}

.spin button {
    height: 8px;
    border: 1px solid #4a6a20;
    border-radius: 2px;
    background: #86c536;
    font-size: 7px;
    line-height: 5px;
}

.bridge {
    margin-left: auto;
}

.bridge svg {
    width: 20px;
    height: 20px;
}

.flyout {
    display: flex;
    align-items: center;
    justify-content: center;
    align-self: flex-start;
    width: 10px;
    height: 10px;
    margin: 3px 6px 0 10px;
    border: 1px solid #777;
    border-radius: 50%;
    background: #fff;
}

.workspace {
    flex: 1;
    min-height: 0;
    display: flex;
    padding: 8px 147px 0 2px;
    border-right: 2px solid #ddd;
    background: #808080;
}

.document {
    flex: 1;
    display: flex;
    flex-direction: column;
    border: 3px solid #4b9fd0;
    border-width: 0 4px 3px 3px;
    border-radius: 6px 6px 0 0;
    outline: 1px solid #5a6a78;
    background: #f5f5f5;
}

.doc-title h2 {
    padding-right: 17px;
    font-size: 11px;
}

.doc-title .window-buttons {
    margin-right: 13px;
}

.doc-body {
    flex: 1;
    min-height: 0;
    display: flex;
    background: #fff;
}

.canvas {
    flex: 1;
    height: 100%;
    min-width: 0;
}

.scroll {
    flex: none;
    display: flex;
    flex-direction: column;
    justify-content: space-between;
    width: 13px;
    border-left: 1px solid #888;
    background: #f5f5f5;
}

.tall {
    width: 15px;
}

.scroll button,
.scroll-right {
    display: flex;
    align-items: center;
    justify-content: center;
    height: 14px;
    border: 1px solid #4e89ae;
    border-radius: 2px;
    background: linear-gradient(#b7e1f8, #5ab4e8);
}

.scroll i,
.scroll-right i {
    width: 5px;
    height: 3px;
    border: 1px solid #466;
    border-radius: 2px;
    background: #fff;
}

.doc-bottom {
    flex: none;
    display: flex;
    align-items: center;
    height: 15px;
    border-top: 1px solid #777;
    background: #f5f5f5;
}

.thumb {
    width: 15px;
    height: 13px;
    margin-left: 58%;
}

.thumb svg {
    height: 11px;
}

.scroll-right {
    width: 13px;
    height: 13px;
    margin-left: auto;
}

.sizer {
    width: 12px;
    height: 11px;
    margin-left: 2px;
    background: radial-gradient(#999 1px, transparent 1px) 0 0 / 4px 4px;
    clip-path: polygon(100% 0, 100% 100%, 0 100%);
}

.toolbox {
    position: absolute;
    top: 144px;
    left: 33px;
    z-index: 2;
    width: 56px;
    padding: 0 2px 3px;
    border: 1px solid #777;
    outline: 1px solid #b5b5b5;
    outline-offset: -2px;
    background: #f5f5f5;
    box-shadow: 1px 1px 0 #999;
}

.palette-title {
    height: 15px;
    border-bottom: 1px solid #aaa;
    background: linear-gradient(#fff, #ddd);
}

.banner {
    width: 100%;
    height: 21px;
    margin-bottom: 4px;
    border-bottom: 1px solid #555;
}

.tool-group {
    display: grid;
    grid-template-columns: 1fr 1fr;
    margin: 0 2px 2px;
    padding-bottom: 1px;
    border-bottom: 1px solid #98b6cc;
}

.tool-group button {
    position: relative;
    display: flex;
    align-items: center;
    justify-content: center;
    height: 19px;
    border: 1px solid transparent;
}

.tool-group svg {
    width: 17px;
    height: 17px;
}

.tool-group .more::after {
    content: "";
    position: absolute;
    right: 0;
    bottom: 0;
    border: 2px solid #111;
    border-top-color: transparent;
    border-left-color: transparent;
}

.tool-group .active,
.mode-row .active {
    border: 1px solid #444;
    border-radius: 3px;
    background: #ccc;
}

.fill-stroke {
    width: 48px;
    height: 42px;
    margin: 0 auto;
}

.mode-row {
    display: flex;
    justify-content: space-between;
    margin: 0 2px;
    padding: 3px 2px 2px;
    border-top: 1px solid #98b6cc;
}

.mode-row button {
    height: 14px;
    border: 1px solid transparent;
}

.mode-row svg {
    width: 12px;
    height: 12px;
}

.palette {
    position: absolute;
    right: 28px;
    z-index: 2;
    width: 190px;
    border: 2px solid #999;
    outline: 1px solid #777;
    outline-offset: -1px;
    background: #f5f5f5;
    box-shadow: 1px 1px 0 #666;
}

.colors {
    top: 116px;
}

.styles {
    top: 303px;
}

.palette .palette-title {
    display: flex;
    align-items: flex-end;
    justify-content: flex-end;
    padding-right: 2px;
}

.palette-title .green {
    width: 13px;
    height: 12px;
    border-radius: 3px 3px 0 0;
}

.tabs {
    position: relative;
    display: flex;
    height: 16px;
    padding: 2px 0 0 2px;
    background: #a8a8a8;
}

.tabs::after {
    content: "";
    position: absolute;
    right: 0;
    bottom: 0;
    width: 28px;
    height: 12px;
    background: #f5f5f5;
    clip-path: polygon(0 100%, 50% 0, 100% 0, 100% 100%);
}

.tab {
    padding: 0 14px 0 6px;
    margin-right: -10px;
    background: #bdbdb8;
    color: #444;
    line-height: 14px;
    clip-path: polygon(0 0, calc(100% - 14px) 0, 100% 100%, 0 100%);
}

.tab.on {
    position: relative;
    z-index: 1;
    padding: 0 17px 0 6px;
    background: #f5f5f5;
    color: #000;
    clip-path: polygon(0 0, calc(100% - 15px) 0, 100% 100%, 0 100%);
}

.colors .tab.on:has(small) {
    padding: 0 15px 0 2px;
}

.tab small {
    display: inline-block;
    width: 9px;
    font-size: 8px;
}

.ramp {
    display: flex;
    height: 17px;
    margin: 4px 3px 3px;
    border: 1px solid #333;
    border-top: 2px solid #27384a;
    background: #fff;
}

.ramp svg {
    width: 14px;
    height: 14px;
}

.spectrum {
    flex: 1;
    background: linear-gradient(#fff8, transparent 40%, transparent 60%, #0008), linear-gradient(90deg, #e60012, #f9e000 16%, #3cb034 33%, #18a8e0 50%, #1c2f98 66%, #c41088 84%, #e60028);
}

.bw {
    width: 14px;
    background: linear-gradient(#fff 50%, #000 50%);
}

.divider {
    height: 4px;
    border: 1px solid #888;
    border-width: 1px 0;
    background: #ccc;
}

.list {
    display: flex;
    border-top: 1px solid #222;
}

.swatches {
    flex: 1;
    display: grid;
    grid-template-columns: repeat(12, 1fr);
    grid-auto-rows: 14px;
    background: #111;
}

.swatches button {
    border-right: 1px solid #222;
    border-bottom: 1px solid #222;
}

.swatches svg {
    width: 100%;
    height: 13px;
}

.palette-foot {
    display: flex;
    align-items: center;
    height: 15px;
    border-top: 1px solid #222;
}

.spread {
    justify-content: space-between;
    padding-left: 2px;
}

.palette-foot svg {
    width: 12px;
    height: 12px;
}

.palette-foot .wide,
.framed svg {
    width: 22px;
}

.framed {
    border: 1px solid #444;
    border-radius: 3px;
    background: #ddd;
}

.palette-foot .framed svg {
    height: 9px;
}

.ends {
    justify-content: flex-end;
    gap: 14px;
}

.ends .sizer {
    margin-left: -4px;
}

.style-area {
    flex: 1;
    height: 86px;
}

.style-row {
    display: grid;
    grid-template-columns: repeat(6, 1fr);
    border-bottom: 1px solid #222;
    background: #fff;
}

.style-row button {
    border-right: 1px solid #222;
}

.style-row svg {
    width: 28px;
    height: 28px;
}

.appearance {
    flex: 1;
    height: 71px;
}

.appearance li {
    height: 18px;
    padding-left: 20px;
    border-bottom: 1px solid #444;
    line-height: 17px;
}

.ime {
    position: absolute;
    left: 1px;
    bottom: 25px;
    z-index: 3;
    display: flex;
    gap: 2px;
    font: 13px/18px "Liberation Mono", "Noto Sans CJK SC", monospace;
}

.ime-bar {
    display: flex;
    align-items: center;
    height: 23px;
    padding: 1px;
    border: 1px solid #eee;
    border-right-color: #555;
    border-bottom-color: #555;
    background: #c8c8c8;
}

.ime-bar > button {
    height: 19px;
    padding: 0 1px;
    border-right: 1px solid #555;
    white-space: nowrap;
}

.ime-bar svg {
    width: 17px;
    height: 17px;
}

.ime-bar .ime-name {
    font-size: 14px;
}

.ime-input {
    width: 52px;
    height: 22px;
    padding: 0 2px;
    border: 3px solid #ddd;
    background: #bdbdbd;
}

.ime-bar.candidates {
    padding: 0 3px;
}

.candidates b {
    width: 17px;
    font: italic bold 10px "Liberation Serif", serif;
    color: #0818e0;
}

.candidates sup {
    line-height: 1px;
}

.candidates .cand {
    margin-right: 7px;
    padding: 0;
    border: 0;
}

.pager {
    display: flex;
}

.pager button {
    border: 1px solid #f4f4f4;
    border-right-color: #444;
    border-bottom-color: #444;
}

.pager svg {
    width: 10px;
    height: 10px;
}

.net {
    position: absolute;
    right: 0;
    bottom: 25px;
    z-index: 3;
    display: flex;
    align-items: center;
    justify-content: space-between;
    width: 157px;
    height: 23px;
    padding: 0 5px;
    border: 1px solid #a6c4d4;
    border-radius: 5px;
    background: linear-gradient(#f7fcfe, #cfe8f2);
    font-size: 10px;
}

.net svg {
    width: 18px;
    height: 18px;
}

.down {
    color: #12a018;
    font-weight: bold;
}

.up {
    color: #f2a010;
    font-weight: bold;
}

.taskbar {
    flex: none;
    display: flex;
    align-items: center;
    height: 25px;
    border-top: 2px solid #56656f;
    border-bottom: 1px solid #3d5567;
    background: linear-gradient(#add1e6, #6db3da 45%, #4aa6d8);
    font-size: 10px;
}

.start svg {
    width: 24px;
    height: 22px;
    margin-left: 1px;
}

.quick {
    display: flex;
    gap: 6px;
    margin-left: 36px;
}

.quick svg {
    width: 16px;
    height: 16px;
}

.chevron {
    margin-left: 12px;
    border: 4px solid transparent;
    border-left: 4px solid #fff;
    border-right: 0;
}

.tasks {
    display: flex;
    flex: 1;
    margin-left: 11px;
}

.tasks button {
    display: flex;
    align-items: center;
    gap: 4px;
    width: 144px;
    height: 20px;
    padding-left: 7px;
    white-space: nowrap;
}

.tasks svg {
    width: 14px;
    height: 14px;
}

.tasks .current {
    border: 1px solid #5d8040;
    border-radius: 2px;
    background: #f5f5f5;
}

.tray {
    display: flex;
    align-items: center;
    gap: 6px;
    padding-right: 11px;
    color: #fff;
}

.tray svg {
    width: 15px;
    height: 15px;
}

.lang {
    background: #7bbce2;
}

.desk {
    font-size: 11px;
}

.tray .chevron {
    margin-left: 0;
}

.tray-icons {
    display: flex;
}
</style>
